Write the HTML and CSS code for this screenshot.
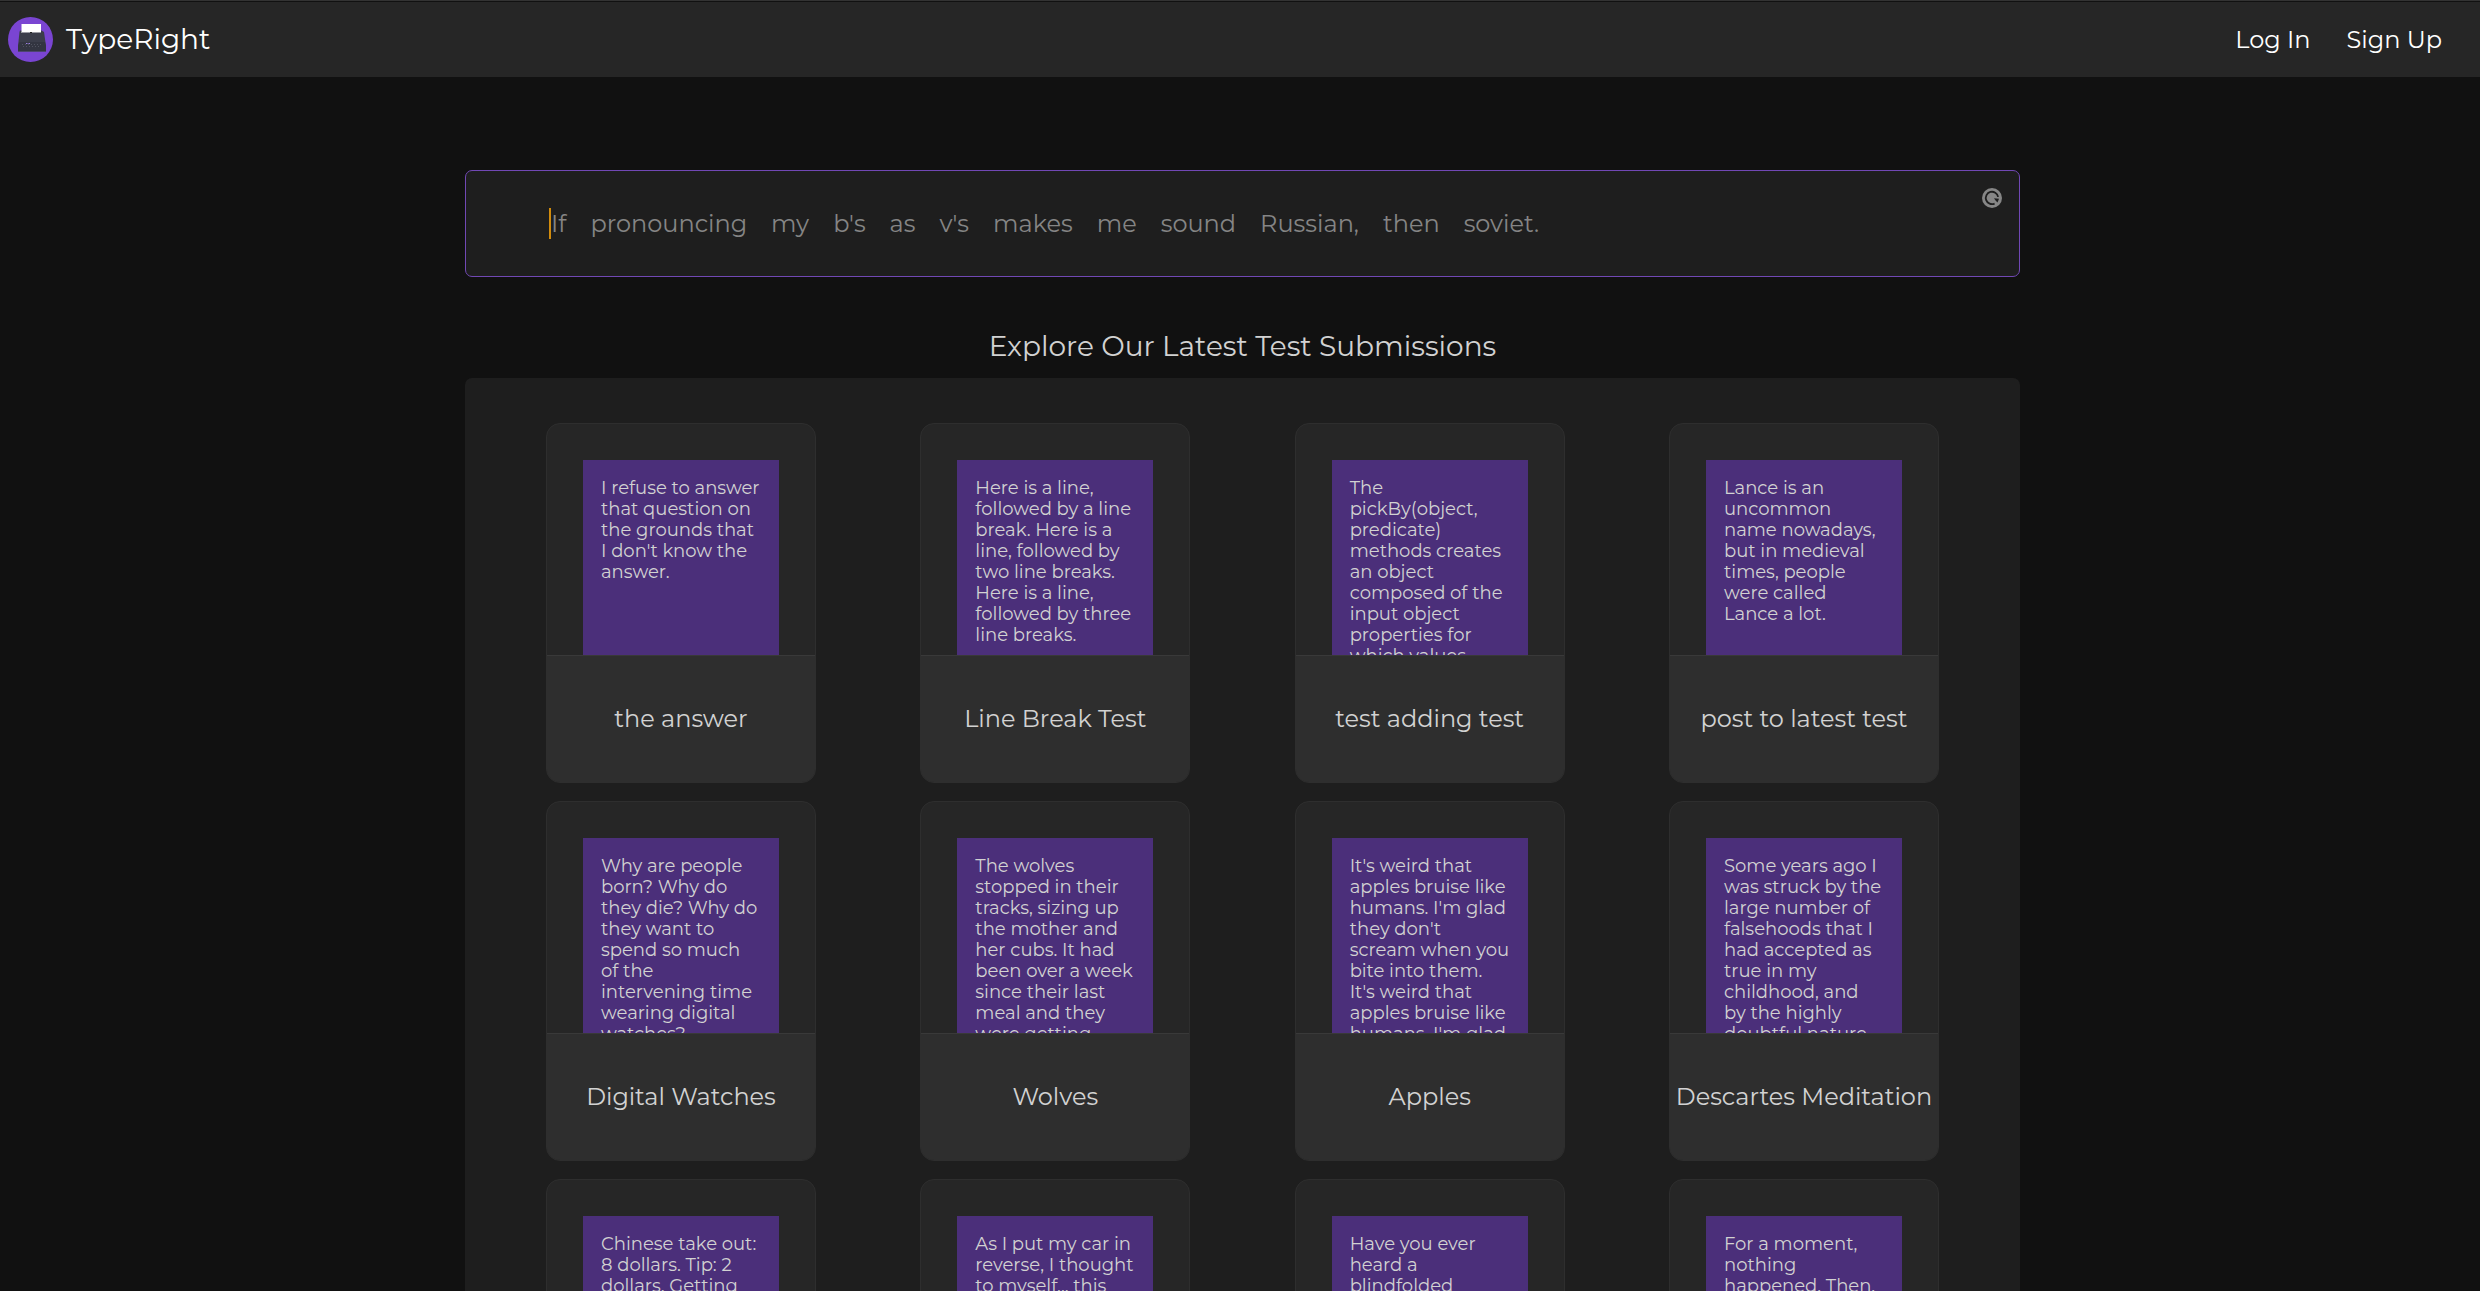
FILE: index.html
```html
<!DOCTYPE html>
<html lang="en">
<head>
<meta charset="utf-8">
<title>TypeRight</title>
<link rel="stylesheet" href="styles.css">
</head>
<body>
<header class="navbar">
  <a class="brand" href="#">
    <svg class="logo" viewBox="0 0 45 45" aria-hidden="true">
      <circle cx="22.500" cy="22.500" r="22.500" fill="#7a45d2"/>
      <path d="M12 13.500h21.500l2.500 1.500 2 14v6H10v-6l1.500-14z" fill="#3b3d4a"/>
      <path d="M11.500 25h25.500l1 4v6H10v-6z" fill="#333541"/>
      <path d="M13.500 7H33v9H13.500z" fill="#fff"/>
      <path d="M13.500 15.500H33" stroke="#9a9aa2"/>
      <path d="M22 15.500h2" stroke="#222"/>
      <path d="M10 34.500h28" stroke="#4d4470"/>
      <path d="M14 27.500h20M15 29.500h18" stroke="#50525f" stroke-dasharray="1 2" fill="none"/>
      <path d="M18 26.500h4" stroke="#9a7fe0" stroke-dasharray="1.500 1"/>
    </svg>
    <span>TypeRight</span>
  </a>
  <nav class="links">
    <a href="#">Log In</a>
    <a href="#">Sign Up</a>
  </nav>
</header>
<main class="page">
  <section class="typing">
    <p class="words"><span class="caret"></span><span>If</span><span>pronouncing</span><span>my</span><span>b's</span><span>as</span><span>v's</span><span>makes</span><span>me</span><span>sound</span><span>Russian,</span><span>then</span><span>soviet.</span></p>
    <button class="restart" type="button" aria-label="Restart">
      <svg viewBox="0 0 20 20" aria-hidden="true">
        <circle cx="10" cy="10" r="10" fill="#868686"/>
        <path d="M16.100 8.800A6.200 6.200 0 1 0 12.600 15.600" fill="none" stroke="#1e1e1e" stroke-width="1.800"/>
        <path d="M12 10.200l5 .6-1.500 3.700-1-.9-.9-1.200z" fill="#1e1e1e"/>
      </svg>
    </button>
  </section>
  <h1 class="heading">Explore Our Latest Test Submissions</h1>
  <section class="panel">
    <a class="card" href="#"><div class="preview"><p class="note">I refuse to answer<br>that question on<br>the grounds that<br>I don't know the<br>answer.</p></div><h2 class="name">the answer</h2></a>
    <a class="card" href="#"><div class="preview"><p class="note">Here is a line,<br>followed by a line<br>break. Here is a<br>line, followed by<br>two line breaks.<br>Here is a line,<br>followed by three<br>line breaks.</p></div><h2 class="name">Line Break Test</h2></a>
    <a class="card" href="#"><div class="preview"><p class="note">The<br>pickBy(object,<br>predicate)<br>methods creates<br>an object<br>composed of the<br>input object<br>properties for<br>which values</p></div><h2 class="name">test adding test</h2></a>
    <a class="card" href="#"><div class="preview"><p class="note">Lance is an<br>uncommon<br>name nowadays,<br>but in medieval<br>times, people<br>were called<br>Lance a lot.</p></div><h2 class="name">post to latest test</h2></a>
    <a class="card" href="#"><div class="preview"><p class="note">Why are people<br>born? Why do<br>they die? Why do<br>they want to<br>spend so much<br>of the<br>intervening time<br>wearing digital<br>watches?</p></div><h2 class="name">Digital Watches</h2></a>
    <a class="card" href="#"><div class="preview"><p class="note">The wolves<br>stopped in their<br>tracks, sizing up<br>the mother and<br>her cubs. It had<br>been over a week<br>since their last<br>meal and they<br>were getting</p></div><h2 class="name">Wolves</h2></a>
    <a class="card" href="#"><div class="preview"><p class="note">It's weird that<br>apples bruise like<br>humans. I'm glad<br>they don't<br>scream when you<br>bite into them.<br>It's weird that<br>apples bruise like<br>humans. I'm glad</p></div><h2 class="name">Apples</h2></a>
    <a class="card" href="#"><div class="preview"><p class="note">Some years ago I<br>was struck by the<br>large number of<br>falsehoods that I<br>had accepted as<br>true in my<br>childhood, and<br>by the highly<br>doubtful nature</p></div><h2 class="name">Descartes Meditation</h2></a>
    <a class="card" href="#"><div class="preview"><p class="note">Chinese take out:<br>8 dollars. Tip: 2<br>dollars. Getting</p></div></a>
    <a class="card" href="#"><div class="preview"><p class="note">As I put my car in<br>reverse, I thought<br>to myself... this</p></div></a>
    <a class="card" href="#"><div class="preview"><p class="note">Have you ever<br>heard a<br>blindfolded</p></div></a>
    <a class="card" href="#"><div class="preview"><p class="note">For a moment,<br>nothing<br>happened. Then,</p></div></a>
  </section>
</main>
</body>
</html>
```
FILE: styles.css
```css
* { box-sizing: border-box; margin: 0; }
body {
  height: 100vh;
  display: flex;
  flex-direction: column;
  overflow: hidden;
  background: #111;
  color: #d2d2d2;
  font-family: Montserrat, Inter, sans-serif;
  font-size: 24px;
  font-weight: 400;
}
a { color: inherit; text-decoration: none; }
.navbar {
  flex: none;
  height: 77px;
  display: flex;
  align-items: center;
  justify-content: space-between;
  padding: 0 38px 0 8px;
  background: #262626;
  border-top: 1px solid #333;
  box-shadow: inset 0 1px #111;
  color: #fff;
}
.brand { display: flex; align-items: center; gap: 13px; font-size: 28px; }
.logo { width: 45px; height: 45px; }
.links { display: flex; gap: 36px; }
.page {
  flex: 1;
  min-height: 0;
  width: 100%;
  max-width: 1560px;
  margin: 0 auto;
  padding: 93px 0 0 5px;
}
.typing {
  display: flex;
  justify-content: space-between;
  align-items: flex-start;
  padding: 17px 17px 37px 72px;
  border: 1px solid #7148b4;
  border-radius: 7px;
  background: #1e1e1e;
}
.words {
  display: flex;
  flex-wrap: wrap;
  gap: 24px;
  padding: 20px 0 0 11px;
  line-height: 31px;
  color: #858585;
}
.caret { width: 2px; height: 31px; margin-right: -24px; background: #d18b0c; }
.restart { width: 20px; height: 20px; padding: 0; border: 0; background: none; }
.restart svg { display: block; }
.heading { padding: 51px 0 14px; font-size: 28px; line-height: 36px; font-weight: 400; text-align: center; }
.panel {
  display: grid;
  grid-template-columns: repeat(4, 270px);
  justify-content: space-between;
  row-gap: 18px;
  padding: 45px 81px;
  border-radius: 7px;
  background: #1e1e1e;
}
.card {
  height: 360px;
  border: 1px solid #2e2e2e;
  border-radius: 14px;
  background: #262626;
  overflow: hidden;
}
.preview { height: 232px; padding: 36px 36px 0; border-bottom: 1px solid #393939; }
.note {
  height: 195px;
  padding: 18px 18px 0;
  overflow: hidden;
  background: #4b2f7a;
  font-size: 18px;
  line-height: 21px;
  white-space: nowrap;
}
.name {
  height: 126px;
  background: #2e2e2e;
  font-size: 24px;
  font-weight: 400;
  line-height: 126px;
  text-align: center;
  white-space: nowrap;
}
```
